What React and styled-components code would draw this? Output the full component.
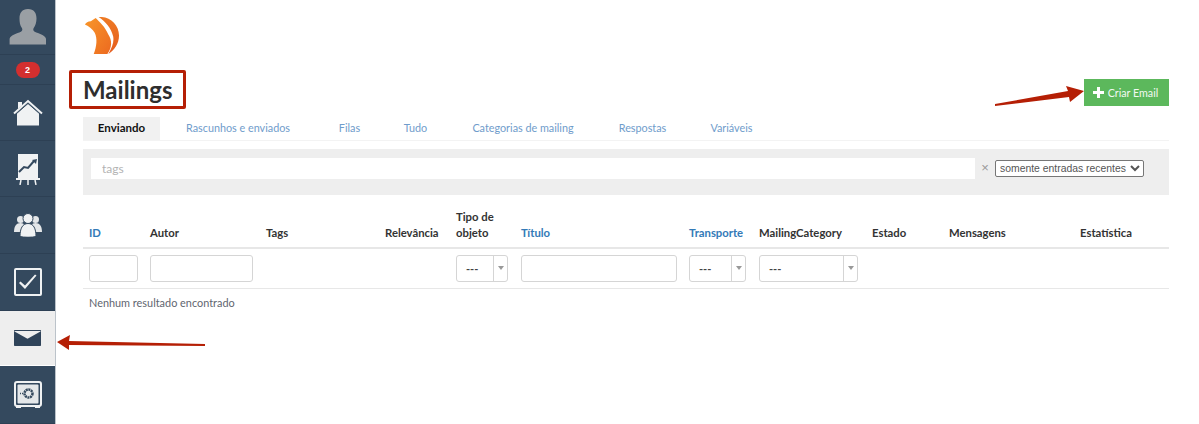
import React from "react";
import styled, { createGlobalStyle } from "styled-components";

const Global = createGlobalStyle`
  html, body { margin: 0; padding: 0; background: #fff; }
  body { font-family: Lato, "Open Sans", sans-serif; font-size: 12px; color: #555; overflow: hidden; }
  * { box-sizing: border-box; }
`;

const Page = styled.div`
  position: relative;
  display: flex;
  width: 1199px;
  height: 424px;
  overflow: hidden;
`;
const Sidebar = styled.nav`
  width: 56px;
  flex: none;
  display: flex;
  flex-direction: column;
  background: #34495e;
  border-right: 1px solid #bcc3ca;
`;
const SideItem = styled.div`
  height: ${p => p.$h}px;
  flex: none;
  display: flex;
  align-items: center;
  justify-content: center;
  background: ${p => (p.$active ? "#eeeeee" : "transparent")};
  border-bottom: 1px solid ${p => (p.$active ? "#ffffff" : "#2d4054")};
`;
const Badge = styled.span`
  width: 24px;
  height: 16px;
  border-radius: 8px;
  background: #d32f2f;
  color: #fff;
  font: 700 9px/16px "Liberation Sans", sans-serif;
  text-align: center;
`;
const Main = styled.main`
  flex: 1;
  min-width: 0;
  padding: 15px 30px 0 27px;
`;
const LogoBox = styled.div`
  height: 40px;
  padding: 2px 0 0 1px;
  svg { display: block; }
`;
const TitleRow = styled.div`
  display: flex;
  justify-content: space-between;
  align-items: flex-start;
  margin-top: 15px;
  height: 47px;
`;
const Title = styled.h1`
  margin: 0 0 0 -14px;
  width: 117px;
  height: 39px;
  padding-left: 11px;
  border: 3px solid #b51f05;
  border-radius: 2px;
  font: 700 24px/33px Lato, sans-serif;
  color: #2e2e2e;
  white-space: nowrap;
`;
const CreateButton = styled.button`
  margin-top: 9px;
  width: 85px;
  height: 27px;
  border: 0;
  padding: 0 2px 0 0;
  background: #5cb85c;
  color: #f2f9f2;
  font: 400 10.7px Lato, sans-serif;
  display: flex;
  align-items: center;
  justify-content: center;
  gap: 4px;
`;
const Tabs = styled.div`
  display: flex;
  height: 24px;
  border-bottom: 1px solid #f3f3f3;
`;
const Tab = styled.div`
  height: 23px;
  width: ${p => p.$w}px;
  flex: none;
  text-align: center;
  font-size: ${p => (p.$active ? "11.5px" : "10.8px")};
  font-weight: ${p => (p.$active ? 700 : 400)};
  line-height: 22px;
  color: ${p => (p.$active ? "#111" : "#6f9ccb")};
  background: ${p => (p.$active ? "#f1f1f1" : "transparent")};
  white-space: nowrap;
`;
const FilterPanel = styled.div`
  margin-top: 8px;
  height: 46px;
  background: #eeeeee;
  padding: 9px 25px 0 8px;
  display: flex;
  align-items: flex-start;
`;
const TagInput = styled.input`
  flex: 1;
  min-width: 0;
  height: 21px;
  border: 0;
  outline: 0;
  padding: 0 11px;
  background: #fff;
  font: 400 12px Lato, sans-serif;
  &::placeholder { color: #b3b3b3; opacity: 1; }
`;
const Clear = styled.span`
  width: 20px;
  text-align: center;
  color: #999;
  font: 400 13px/20px "Liberation Sans", sans-serif;
`;
const RecentSelect = styled.select`
  margin-top: 2px;
  width: 149px;
  height: 17px;
  padding: 0;
  background: #fff;
  border: 1px solid #767676;
  border-radius: 2px;
  color: #555;
  font: 400 10.4px "Liberation Sans", Arial, sans-serif;
`;
const Table = styled.table`
  margin-top: 7px;
  width: 1086px;
  table-layout: fixed;
  border-collapse: collapse;
`;
const Th = styled.th`
  height: 46px;
  padding: 0 0 6px 6px;
  border-bottom: 2px solid #e7e7e7;
  text-align: left;
  vertical-align: bottom;
  font-size: 11.3px;
  font-weight: 700;
  line-height: 16px;
  color: ${p => (p.$link ? "#337ab7" : "#333")};
  white-space: ${p => (p.$wrap ? "normal" : "nowrap")};
`;
const Td = styled.td`
  height: 40px;
  padding: 0 6px;
  border-bottom: 1px solid #e7e7e7;
`;
const TextField = styled.div`
  width: ${p => p.$w}px;
  height: 27px;
  border: 1px solid #d5d5d5;
  border-radius: 3px;
  background: #fff;
`;
const SelectField = styled(TextField)`
  display: flex;
  align-items: center;
`;
const SelectValue = styled.span`
  flex: 1;
  padding-left: 9px;
  font: 700 11px/25px Lato, sans-serif;
  color: #444;
`;
const SelectArrow = styled.span`
  width: 14px;
  height: 100%;
  border-left: 1px solid #d5d5d5;
  display: flex;
  align-items: center;
  justify-content: center;
  &::after {
    content: "";
    border-left: 3px solid transparent;
    border-right: 3px solid transparent;
    border-top: 4px solid #999;
  }
`;
const Empty = styled.div`
  padding: 6px 6px;
  font-size: 10.9px;
  line-height: 16px;
  color: #5f6670;
`;
const ArrowLayer = styled.svg`
  position: absolute;
  left: 0;
  top: 0;
  pointer-events: none;
`;

const White = "#f0f2f3";

const Avatar = () => (
  <svg width="38" height="38" viewBox="0 0 38 38">
    <path fill="#9a9fa4" d="M19 1c6 0 8.500 4 8.500 9.500 0 3.500-1 7-2.800 9.500-.8 1.200-.5 3 1 3.800 4 1.700 10 3 11.300 7v5.700H.6V30.800c1.300-4 7.300-5.300 11.300-7 1.500-.8 1.800-2.600 1-3.800C11 17.500 10.500 14 10.500 10.500 10.500 5 13 1 19 1z" />
  </svg>
);
const Home = () => (
  <svg width="30" height="28" viewBox="0 0 30 28">
    <path fill={White} d="M4 26.500V14L15 4.500 26 14v12.500z" />
    <path fill="none" stroke="#34495e" strokeWidth="1" d="M2.500 15.500L15 4.500l12.500 11" />
    <path fill="none" stroke={White} strokeWidth="2" d="M1 14.500L15 2l14 12.500" />
    <path fill={White} d="M5 3h4v3.500L5 10z" />
  </svg>
);
const Chart = () => (
  <svg width="24" height="32" viewBox="0 0 24 32">
    <path fill={White} d="M2 1h20v24H2z" />
    <path fill="none" stroke="#34495e" strokeWidth="2" d="M3 19l5-5 4 1 6-7" />
    <path fill="#34495e" d="M16 7l5-1-1 5z" />
    <path fill={White} d="M0 25h24v2H0z" />
    <path fill="none" stroke={White} strokeWidth="1.500" d="M5 27l-1 5M19 27l1 5M12 27v5" />
  </svg>
);
const Users = () => (
  <svg width="28" height="24" viewBox="0 0 28 24">
    <g fill="#e4e7e9">
      <circle cx="6.500" cy="6.500" r="3.500" />
      <path d="M0 19c0-6 2.500-9 6.500-9s5 3 5 9z" />
      <circle cx="21.500" cy="6.500" r="3.500" />
      <path d="M28 19c0-6-2.500-9-6.500-9s-5 3-5 9z" />
    </g>
    <g fill={White} stroke="#34495e" strokeWidth="1">
      <circle cx="14" cy="5.500" r="5" />
      <path d="M6 23.500c0-8 2.500-13 8-13s8 5 8 13c-4 1-12 1-16 0z" />
    </g>
  </svg>
);
const Tasks = () => (
  <svg width="28" height="28" viewBox="0 0 28 28">
    <rect x="1" y="1" width="26" height="26" rx="1" fill="none" stroke={White} strokeWidth="2" />
    <path fill={White} d="M5 15l1.500-1.500L11 17.500 21 6.500l1.500 1L11 21z" />
  </svg>
);
const Mail = () => (
  <svg width="27" height="16" viewBox="0 0 27 16">
    <path fill="#2f4359" d="M1 0h25c.6 0 1 .4 1 1v14c0 .6-.4 1-1 1H1c-.6 0-1-.4-1-1V1c0-.6.400-1 1-1z" />
    <path fill="#eeeeee" d="M.5 1h26v.6L13.500 8.800.5 1.600z" />
  </svg>
);
const Safe = () => (
  <svg width="28" height="28" viewBox="0 0 28 28">
    <rect x="1" y="1" width="26" height="24" rx="2" fill="#34495e" stroke={White} strokeWidth="2" />
    <rect x="3.500" y="3.500" width="21" height="19" rx="1" fill="#e4e7e9" />
    <circle cx="14.500" cy="12.500" r="4" fill="none" stroke="#34495e" strokeWidth="2.500" strokeDasharray="2 .6" />
    <path stroke="#34495e" strokeWidth="1.500" strokeDasharray="1 1" d="M6 12.500h4" />
    <path fill={White} d="M2 25h5v2H2zM21 25h5v2h-5z" />
  </svg>
);
const Logo = () => (
  <svg width="36" height="38" viewBox="4 5 37 41" preserveAspectRatio="none">
    <defs>
      <linearGradient id="lg" x1="0" y1="0" x2="1" y2="1">
        <stop offset="0" stopColor="#f8962a" />
        <stop offset="1" stopColor="#ec6a20" />
      </linearGradient>
      <linearGradient id="lc" x1="0" y1="0" x2="0" y2="1">
        <stop offset="0" stopColor="#ee7a24" />
        <stop offset="1" stopColor="#e55c1e" />
      </linearGradient>
    </defs>
    <path fill="url(#lg)" d="M5 13C6 11 8 9.500 11 9.500L16 6C20 10 26 16 29 24C33 30 33 38 28 45H14C17 37 18 28 15 22C13 18 9 15 5 13Z" />
    <path fill="url(#lc)" d="M19 5C30 4 40 13 40 25C40 34 35 41 29 45C33 38 35 32 34 26C32 17 26 10 19 5Z" />
  </svg>
);

const columns = [
  { label: "ID", w: 61, link: true },
  { label: "Autor", w: 116 },
  { label: "Tags", w: 119 },
  { label: "Relevância", w: 71 },
  { label: "Tipo de objeto", w: 65, wrap: true },
  { label: "Título", w: 168, link: true },
  { label: "Transporte", w: 70, link: true },
  { label: "MailingCategory", w: 113 },
  { label: "Estado", w: 77 },
  { label: "Mensagens", w: 131 },
  { label: "Estatística", w: 95 },
];

const tabs = [
  ["Enviando", 77, true],
  ["Rascunhos e enviados", 156],
  ["Filas", 67],
  ["Tudo", 65],
  ["Categorias de mailing", 150],
  ["Respostas", 89],
  ["Variáveis", 89],
];

const Dropdown = ({ w }) => (
  <SelectField $w={w}>
    <SelectValue>---</SelectValue>
    <SelectArrow />
  </SelectField>
);

export default function App() {
  return (
    <Page>
      <Global />
      <Sidebar>
        <SideItem $h={55}><Avatar /></SideItem>
        <SideItem $h={30}><Badge>2</Badge></SideItem>
        <SideItem $h={56}><Home /></SideItem>
        <SideItem $h={56}><Chart /></SideItem>
        <SideItem $h={57}><Users /></SideItem>
        <SideItem $h={57}><Tasks /></SideItem>
        <SideItem $h={55} $active><Mail /></SideItem>
        <SideItem $h={58}><Safe /></SideItem>
      </Sidebar>
      <Main>
        <LogoBox><Logo /></LogoBox>
        <TitleRow>
          <Title>Mailings</Title>
          <CreateButton>
            <svg width="11" height="11" viewBox="0 0 11 11"><path fill="#fff" d="M4 0h3v4h4v3H7v4H4V7H0V4h4z" /></svg>
            Criar Email
          </CreateButton>
        </TitleRow>
        <Tabs>
          {tabs.map(([label, w, active]) => (
            <Tab key={label} $w={w} $active={active}>{label}</Tab>
          ))}
        </Tabs>
        <FilterPanel>
          <TagInput placeholder="tags" readOnly />
          <Clear>×</Clear>
          <RecentSelect defaultValue="r">
            <option value="r">somente entradas recentes</option>
          </RecentSelect>
        </FilterPanel>
        <Table>
          <colgroup>
            {columns.map(c => <col key={c.label} width={c.w} />)}
          </colgroup>
          <thead>
            <tr>
              {columns.map(c => (
                <Th key={c.label} $link={c.link} $wrap={c.wrap}>{c.label}</Th>
              ))}
            </tr>
          </thead>
          <tbody>
            <tr>
              <Td><TextField $w={49} /></Td>
              <Td><TextField $w={103} /></Td>
              <Td />
              <Td />
              <Td><Dropdown w={52} /></Td>
              <Td><TextField $w={156} /></Td>
              <Td><Dropdown w={57} /></Td>
              <Td><Dropdown w={99} /></Td>
              <Td />
              <Td />
              <Td />
            </tr>
          </tbody>
        </Table>
        <Empty>Nenhum resultado encontrado</Empty>
      </Main>
      <ArrowLayer width="1199" height="424" viewBox="0 0 1199 424">
        <path fill="#b51f05" d="M995 104l73-13-2-5 18 5-14 11-1-5-74 9z" />
        <path fill="#b51f05" d="M205 344l-136-3 1-6-13 7 12 8 0-5 136 1z" />
      </ArrowLayer>
    </Page>
  );
}
